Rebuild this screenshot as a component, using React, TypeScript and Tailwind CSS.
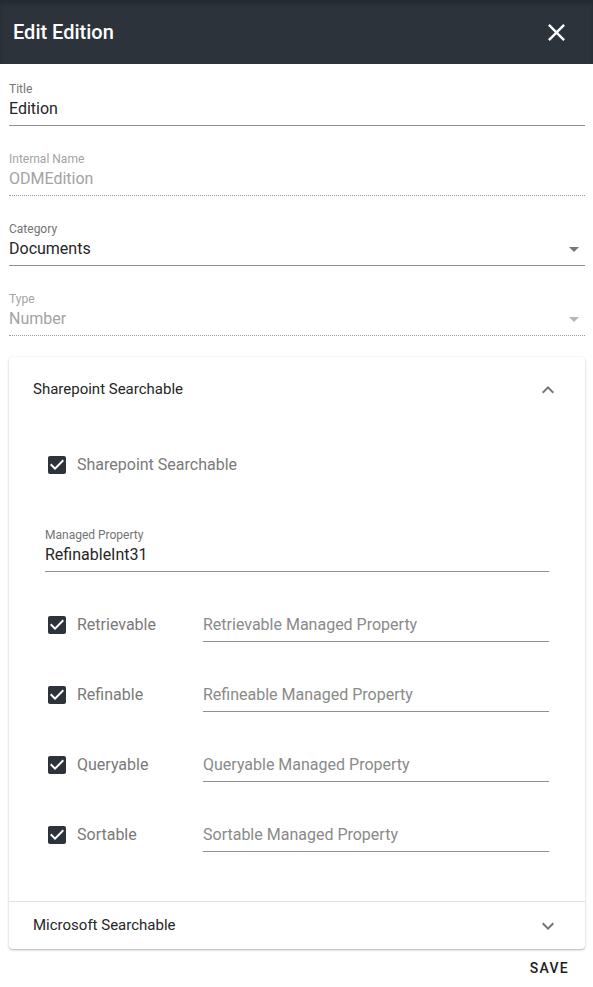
import type { ReactNode } from "react";

const CLOSE = "M19 6.41 17.59 5 12 10.59 6.41 5 5 6.41 10.59 12 5 17.59 6.41 19 12 13.41 17.59 19 19 17.59 13.41 12z";
const CHECKED =
  "M19 3H5c-1.11 0-2 .9-2 2v14c0 1.1.89 2 2 2h14c1.11 0 2-.9 2-2V5c0-1.1-.89-2-2-2zm-9 14l-5-5 1.41-1.41L10 14.17l7.59-7.59L19 8l-9 9z";
const EXPAND_LESS = "M12 8l-6 6 1.41 1.41L12 10.83l4.59 4.58L18 14z";
const EXPAND_MORE = "M16.59 8.59 12 13.17 7.41 8.59 6 10l6 6 6-6z";
const ARROW_DROP = "M7 10l5 5 5-5z";

function Icon({ d, size = 24, className }: { d: string; size?: number; className?: string }) {
  return (
    <svg width={size} height={size} viewBox="0 0 24 24" className={className} fill="currentColor">
      <path d={d} />
    </svg>
  );
}

function Field({
  label,
  value,
  disabled,
  select,
  className = "",
}: {
  label: string;
  value: string;
  disabled?: boolean;
  select?: boolean;
  className?: string;
}) {
  return (
    <div className={`pt-px ${className}`}>
      <p className={`text-xs leading-4 ${disabled ? "text-[#a3a3a3]" : "text-[#747474]"}`}>{label}</p>
      <div
        className={`flex items-center justify-between pb-[4px] border-b ${
          disabled ? "border-dotted border-[#9a9a9a]" : "border-solid border-[#8f8f8f]"
        }`}
      >
        <span className={`text-base leading-6 ${disabled ? "text-[#a3a3a3]" : "text-[#262626]"}`}>{value}</span>
        {select && (
          <Icon d={ARROW_DROP} className={`-mr-[1px] ${disabled ? "text-[#b5b5b5]" : "text-[#767676]"}`} />
        )}
      </div>
    </div>
  );
}

function Check({ children }: { children: ReactNode }) {
  return (
    <div className="flex h-6 items-center">
      <Icon d={CHECKED} className="text-[#2c333b]" />
      <span className="ml-2 text-base leading-6 text-[#7a7a7a]">{children}</span>
    </div>
  );
}

function PropRow({ label, placeholder, className = "" }: { label: string; placeholder: string; className?: string }) {
  return (
    <div className={`flex items-start pt-px ${className}`}>
      <div className="w-[158px] shrink-0">
        <Check>{label}</Check>
      </div>
      <div className="flex-1 border-b border-[#8f8f8f] pb-[4px]">
        <span className="text-base leading-6 text-[#8a8a8a]">{placeholder}</span>
      </div>
    </div>
  );
}

export default function App() {
  return (
    <div className="min-h-[987px] bg-white font-['Roboto',sans-serif]">
      <header className="flex h-16 items-center justify-between bg-[#2c333b] pl-[13px] pr-[22px] shadow-[inset_0_4px_4px_rgba(0,0,0,0.18)]">
        <h1 className="text-xl font-medium text-white">Edit Edition</h1>
        <Icon d={CLOSE} size={29} className="text-white" />
      </header>

      <main className="pl-[9px] pr-2 pt-4">
        <Field label="Title" value="Edition" />
        <Field label="Internal Name" value="ODMEdition" disabled className="mt-6" />
        <Field label="Category" value="Documents" select className="mt-6" />
        <Field label="Type" value="Number" disabled select className="mt-6" />

        <section className="mt-[21px] overflow-hidden rounded bg-white shadow-[0_1px_3px_rgba(0,0,0,0.2),0_1px_1px_rgba(0,0,0,0.12)]">
          <div className="flex h-16 items-center justify-between pl-6 pr-[25px] pt-px">
            <h2 className="text-[15px] text-[#262626]">Sharepoint Searchable</h2>
            <Icon d={EXPAND_LESS} className="text-[#757575]" />
          </div>
          <div className="px-9 pb-[49px] pt-[31px]">
            <div className="pt-px">
              <Check>Sharepoint Searchable</Check>
            </div>
            <Field label="Managed Property" value="RefinableInt31" className="mt-[49px]" />
            <PropRow label="Retrievable" placeholder="Retrievable Managed Property" className="mt-10" />
            <PropRow label="Refinable" placeholder="Refineable Managed Property" className="mt-10" />
            <PropRow label="Queryable" placeholder="Queryable Managed Property" className="mt-10" />
            <PropRow label="Sortable" placeholder="Sortable Managed Property" className="mt-10" />
          </div>
          <div className="flex h-[48px] items-center justify-between border-t border-[#e0e0e0] pl-6 pr-[25px]">
            <h2 className="text-[15px] text-[#262626]">Microsoft Searchable</h2>
            <Icon d={EXPAND_MORE} className="text-[#757575]" />
          </div>
        </section>

        <div className="flex justify-end pr-[8px] pt-px">
          <button type="button" className="px-2 py-[6px] text-sm font-medium uppercase leading-6 tracking-[1.25px] text-[#212121]">
            Save
          </button>
        </div>
      </main>
    </div>
  );
}
